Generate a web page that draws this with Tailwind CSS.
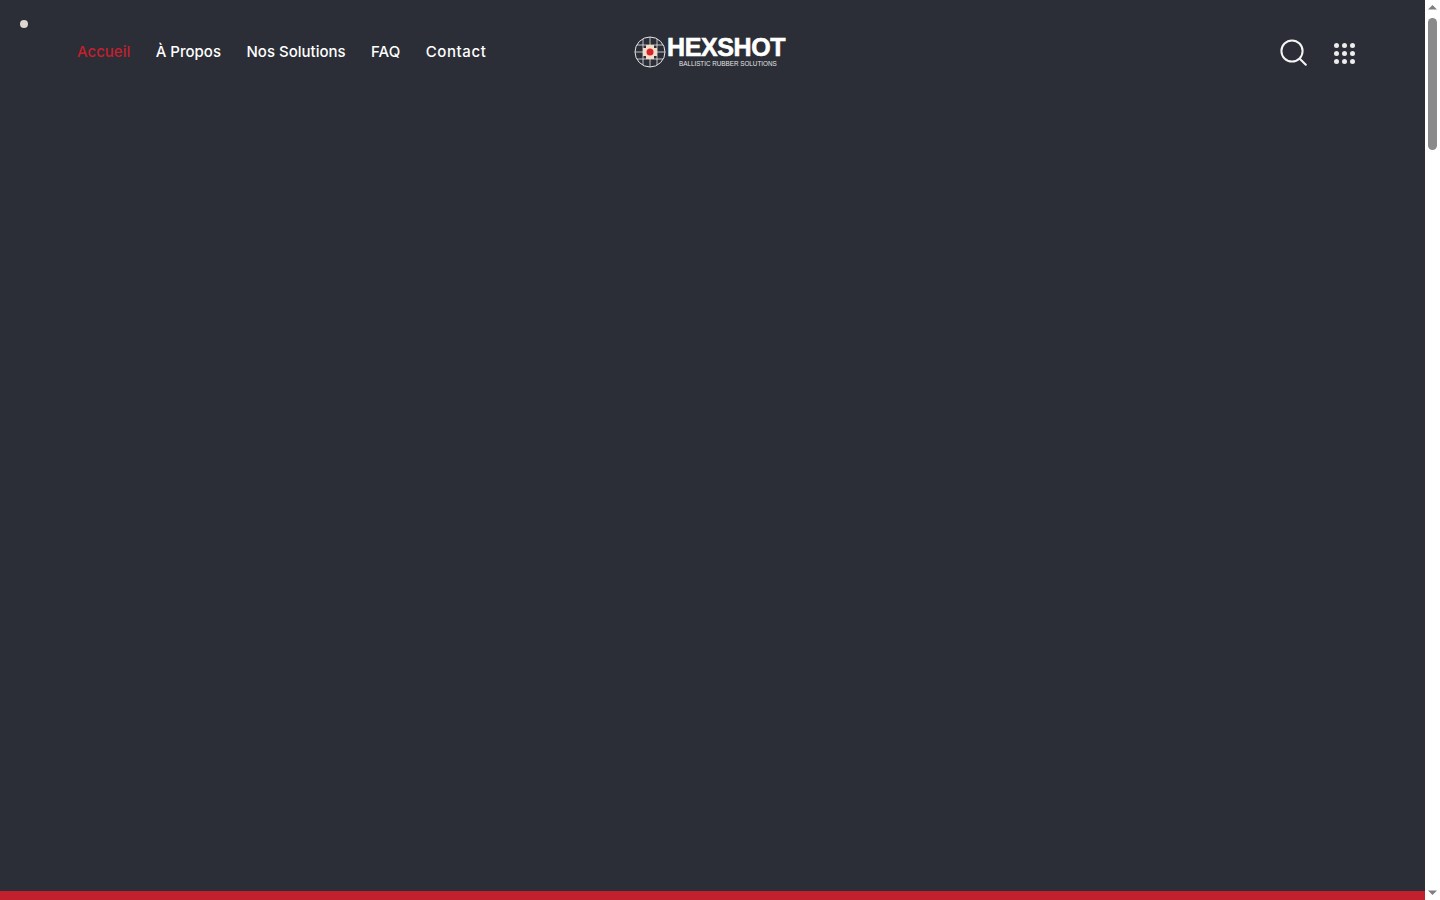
<!DOCTYPE html>
<html lang="fr">
<head>
    <meta charset="UTF-8">
    <title>Hexshot</title>
    <script src="https://cdn.jsdelivr.net/npm/@tailwindcss/browser@4"></script>
</head>
<body class="h-screen overflow-hidden flex bg-white font-['Inter',sans-serif]">

    <!-- page -->
    <div class="relative flex-1 h-full flex flex-col justify-between bg-[#2b2e36]">
        <span class="absolute left-5 top-5 w-2 h-2 rounded-full bg-[#dcd8d0]"></span>

        <header class="flex items-center pl-[77px] pr-[70px] pt-[35px]">
            <nav class="w-[557px] flex gap-[25.5px] text-[15px] leading-[32px] font-medium text-white">
                <a href="#" class="text-[#c3202e]">Accueil</a>
                <a href="#">À Propos</a>
                <a href="#">Nos Solutions</a>
                <a href="#">FAQ</a>
                <a href="#" class="tracking-[0.6px]">Contact</a>
            </nav>

            <!-- logo -->
            <a href="#" class="flex items-center w-[152px] h-[32px] mt-[1px]">
                <svg class="w-[32px] h-[32px] shrink-0" viewBox="0 0 32 32" fill="none" stroke="#e6e6e6" stroke-width="1">
                    <circle cx="16" cy="16" r="15" />
                    <path d="M16 1v8M16 23v8M1 16h8M23 16h8M9 3v26M23 3v26M3 9h26M3 23h26" stroke-width="0.8" />
                    <path d="M12 9h8v3h3v8h-3v3h-8v-3h-3v-8h3z" fill="#f1dcc8" stroke="none" />
                    <circle cx="16" cy="16" r="3.5" fill="#d8232a" stroke="none" />
                </svg>
                <span class="ml-[1px] flex flex-col items-start font-['Liberation_Sans',sans-serif] text-white">
                    <span class="text-[25px] leading-[23px] font-bold tracking-[-0.4px] [-webkit-text-stroke:0.6px_white]">HEXSHOT</span>
                    <span class="ml-[12px] mt-[1px] text-[6.3px] leading-[8px] text-[#e4e4e4]">BALLISTIC RUBBER SOLUTIONS</span>
                </span>
            </a>

            <div class="ml-auto mt-[4px] flex items-center gap-[27px]">
                <svg class="w-[27px] h-[27px] -translate-y-px" viewBox="0 0 27 27" fill="none" stroke="#f5f5f5" stroke-width="2" stroke-linecap="round">
                    <circle cx="12" cy="12" r="10.6" />
                    <path d="M20 20l5.8 5.8" />
                </svg>
                <div class="grid grid-cols-3 gap-[3px]">
                    <span class="w-[5px] h-[5px] rounded-full bg-[#ececec]"></span>
                    <span class="w-[5px] h-[5px] rounded-full bg-[#ececec]"></span>
                    <span class="w-[5px] h-[5px] rounded-full bg-[#ececec]"></span>
                    <span class="w-[5px] h-[5px] rounded-full bg-[#ececec]"></span>
                    <span class="w-[5px] h-[5px] rounded-full bg-[#ececec]"></span>
                    <span class="w-[5px] h-[5px] rounded-full bg-[#ececec]"></span>
                    <span class="w-[5px] h-[5px] rounded-full bg-[#ececec]"></span>
                    <span class="w-[5px] h-[5px] rounded-full bg-[#ececec]"></span>
                    <span class="w-[5px] h-[5px] rounded-full bg-[#ececec]"></span>
                </div>
            </div>
        </header>

        <div class="h-[9px] bg-[#c3202e]"></div>
    </div>

    <!-- scrollbar -->
    <div class="w-[15px] h-full flex flex-col items-center bg-white">
        <svg class="w-[15px] h-[15px] shrink-0" viewBox="0 0 15 15" fill="#7f7f7f"><path d="M3 9.5L7.5 5l4.5 4.5z" /></svg>
        <div class="mt-[3px] w-[9px] h-[132px] rounded-full bg-[#8a8a8a]"></div>
        <svg class="mt-auto w-[15px] h-[15px] shrink-0" viewBox="0 0 15 15" fill="#7f7f7f"><path d="M3 5.5L7.5 10l4.5-4.5z" /></svg>
    </div>

</body>
</html>
